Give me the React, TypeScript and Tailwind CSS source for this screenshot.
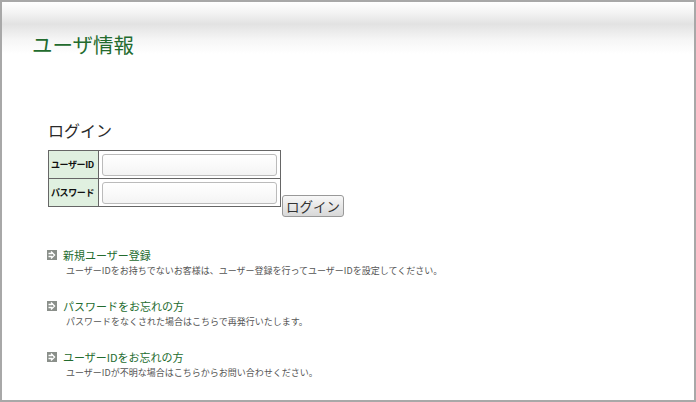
import React from 'react';

const font = { fontFamily: '"Noto Sans CJK JP", "Noto Sans", sans-serif' };

const links = [
  {
    title: '新規ユーザー登録',
    note: 'ユーザーIDをお持ちでないお客様は、ユーザー登録を行ってユーザーIDを設定してください。',
  },
  {
    title: 'パスワードをお忘れの方',
    note: 'パスワードをなくされた場合はこちらで再発行いたします。',
  },
  {
    title: 'ユーザーIDをお忘れの方',
    note: 'ユーザーIDが不明な場合はこちらからお問い合わせください。',
  },
];

function ArrowIcon() {
  return (
    <svg width="10" height="10" viewBox="0 0 10 10" className="shrink-0">
      <rect width="10" height="10" fill="#8a8f8a" />
      <path d="M1.5 3.5h3.5M1.5 6.5h3.5M4 1.5l3.5 3.5L4 8.5" stroke="#fff" strokeWidth="1.4" fill="none" />
    </svg>
  );
}

export default function App() {
  return (
    <div className="h-[402px] w-[696px] overflow-hidden bg-white" style={font}>
      <div className="flex h-full flex-col border-2 border-[#a8a8a8]">
        <div className="h-[64px] bg-[linear-gradient(to_bottom,#ffffff_0px,#f4f4f4_10px,#e2e2e2_22px,#f6f6f6_38px,#ffffff_52px)] pl-[30px] pt-[29px]">
          <h1 className="text-[20.5px] leading-[26px] text-[#236b2e]">ユーザ情報</h1>
        </div>

        <div className="pl-[45px] pt-[54px]">
          <h2 className="pl-[1px] text-[16px] leading-[20px] text-[#2a2a2a]">ログイン</h2>

          <div className="mt-[10px] flex items-end pl-[1px]">
            <table className="border-collapse border border-[#666]">
              <tbody>
                <tr>
                  <th className="h-[28px] w-[50px] whitespace-nowrap border border-[#666] bg-[#e0f0e0] px-[2px] text-left text-[9px] font-bold tracking-[-0.4px] text-[#111]">
                    ユーザーID
                  </th>
                  <td className="border border-[#666] px-[3px]">
                    <input className="block h-[22px] w-[175px] rounded-[3px] border border-[#bbb] bg-[linear-gradient(to_bottom,#ffffff,#f4f4f4)]" />
                  </td>
                </tr>
                <tr>
                  <th className="h-[28px] w-[50px] whitespace-nowrap border border-[#666] bg-[#e0f0e0] px-[2px] text-left text-[9px] font-bold tracking-[-0.4px] text-[#111]">
                    パスワード
                  </th>
                  <td className="border border-[#666] px-[3px]">
                    <input className="block h-[22px] w-[175px] rounded-[3px] border border-[#bbb] bg-[linear-gradient(to_bottom,#ffffff,#f4f4f4)]" />
                  </td>
                </tr>
              </tbody>
            </table>
            <button className="mb-[-10px] ml-[1px] h-[22px] rounded-[3px] border border-[#999] bg-[linear-gradient(to_bottom,#f8f8f8,#d8d8d8)] px-[3px] text-[13.5px] leading-[18px] text-[#333]">
              ログイン
            </button>
          </div>

          <div className="mt-[40px] flex flex-col gap-[20px]">
            {links.map((l) => (
              <div key={l.title}>
                <div className="flex items-center gap-[6px]">
                  <ArrowIcon />
                  <span className="text-[11px] leading-[16px] text-[#236b2e]">{l.title}</span>
                </div>
                <p className="mt-[1px] pl-[19px] text-[9px] leading-[14px] text-[#555]">{l.note}</p>
              </div>
            ))}
          </div>
        </div>
      </div>
    </div>
  );
}
